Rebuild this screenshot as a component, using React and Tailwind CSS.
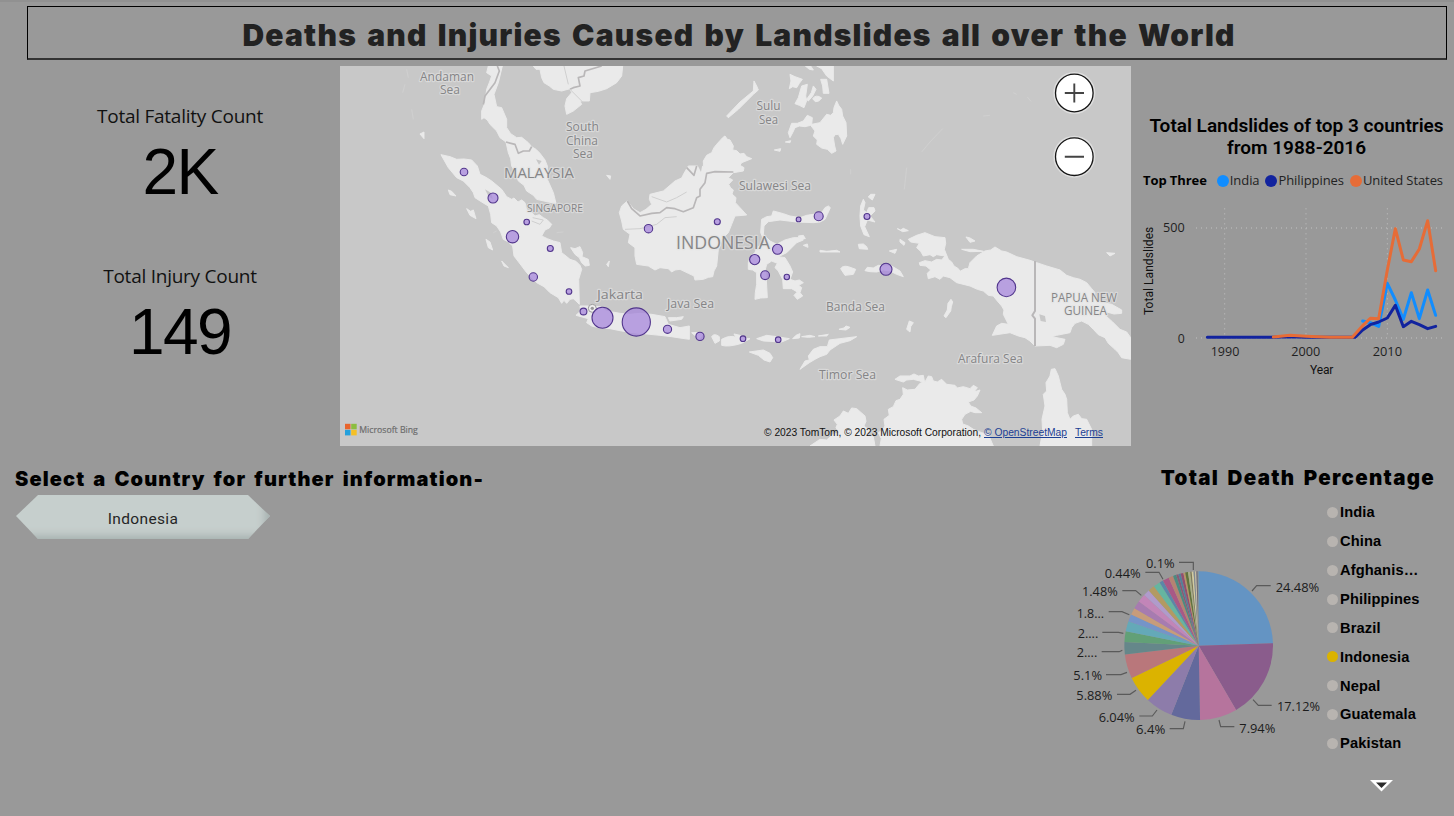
import React from "react";

const LAND = [
  "M303 266L330 272 350 280 372 279 395 282 412 300 420 325 438 334 455 345 485 370 500 392 515 400 522 396 534 408 545 402 555 410 560 432 572 436 585 450 598 446 610 455 622 462 635 475 628 486 615 492 605 510 622 518 640 525 660 530 665 560 678 570 690 580 708 586 720 598 725 610 716 640 718 715 708 705 700 698 690 700 680 712 672 703 665 712 655 695 630 680 612 662 590 650 560 620 545 600 522 570 518 540 505 528 490 520 482 498 470 480 455 470 452 445 445 420 425 408 405 395 400 380 390 365 370 345 350 335 325 305Z",
  "M692 545L705 548 720 542 728 560 726 572 745 580 748 598 736 600 725 590 718 575 705 565Z",
  "M445 0L487 0 475 50 462 85 470 122 485 125 500 160 500 185 512 203 530 215 545 214 565 230 575 242 588 250 600 262 615 282 622 300 622 340 640 380 648 412 625 408 590 400 580 388 560 375 552 358 535 345 528 322 515 300 512 278 505 260 498 228 480 215 470 195 450 175 442 162 432 155 425 160 425 135 435 110 440 70 448 50 455 30 440 20Z",
  "M580 0L588 10 600 10 605 35 612 50 628 60 640 70 665 75 690 68 695 80 680 98 675 120 680 145 700 135 725 115 720 105 732 105 748 105 750 80 775 76 800 68 830 50 845 30 848 0Z",
  "M1155 210L1162 220 1170 222 1180 240 1178 252 1190 254 1200 264 1212 262 1220 272 1235 278 1205 290 1200 298 1212 305 1210 315 1180 320 1165 335 1178 342 1166 355 1172 366 1180 372 1176 384 1188 395 1186 410 1200 425 1220 447 1185 450 1175 475 1165 500 1145 520 1140 540 1135 550 1130 600 1122 615 1118 632 1105 634 1090 640 1065 642 1062 630 1045 622 1020 610 1005 612 995 618 985 608 960 605 945 612 925 600 890 595 885 570 885 545 865 530 870 505 850 490 845 465 838 440 845 420 862 405 880 428 900 440 918 430 935 415 928 400 930 385 970 375 990 358 1005 345 1025 336 1032 322 1045 300 1070 300 1090 302 1090 285 1100 268 1115 260 1122 245 1130 235 1148 215Z",
  "M1250 60L1255 72 1240 85 1220 105 1195 130 1165 155 1160 150 1200 108 1240 75 1242 45Z",
  "M1350 25L1365 32 1387 40 1378 52 1370 65 1358 62 1348 68 1353 45Z",
  "M1385 60L1402 55 1397 90 1400 104 1392 125 1378 118 1365 113 1375 95Z",
  "M1420 60L1428 70 1418 90 1405 105 1400 100 1414 80Z",
  "M1442 40L1460 40 1467 82 1450 82 1448 60Z",
  "M1430 0L1480 0 1480 45 1460 30 1445 8ZM1396 0L1412 0 1420 12 1408 10Z",
  "M1418 98Q1428 84 1445 96Q1438 108 1426 107Z",
  "M1490 105L1496 118 1505 130 1508 150 1518 170 1520 210 1508 235 1503 218 1495 205 1485 206 1480 215 1484 240 1488 255 1475 262 1462 250 1445 246 1430 235 1432 222 1420 210 1425 195 1412 178 1395 182 1378 180 1365 185 1358 200 1350 215 1345 200 1355 172 1372 172 1390 165 1402 148 1417 155 1415 175 1440 170 1460 145 1472 148 1480 140 1482 125Z",
  "M1303 252L1322 248 1320 256ZM1336 228L1352 224 1350 230Z",
  "M1265 460L1280 452 1295 450 1300 435 1330 443 1350 450 1380 455 1400 448 1420 445 1445 440 1455 425 1465 420 1471 425 1462 445 1455 460 1440 468 1420 470 1370 468 1320 462 1285 467 1272 480 1270 505 1290 525 1310 535 1335 522 1360 515 1385 515 1390 522 1370 530 1355 545 1340 560 1315 572 1335 575 1350 600 1358 618 1350 640 1365 645 1378 642 1390 650 1376 658 1385 665 1380 680 1388 690 1372 700 1362 688 1372 678 1355 668 1330 668 1328 640 1320 625 1315 615 1305 605 1312 592 1295 585 1280 595 1276 610 1278 625 1282 695 1262 696 1245 700 1246 680 1250 655 1250 620 1238 612 1225 610 1225 590 1232 570 1245 560 1250 545 1275 530 1262 500Z",
  "M1570 400L1575 410 1570 432 1580 440 1586 425 1602 425 1605 435 1590 450 1605 468 1582 462 1574 482 1588 512 1572 506 1562 480 1560 450 1562 420Z",
  "M1585 393L1592 385 1605 385 1597 402Z",
  "M1375 510L1390 508 1396 518 1380 518ZM1390 538L1402 534 1404 544ZM1440 553L1460 556 1490 553 1500 558 1470 558 1440 558ZM1555 535L1570 534 1580 542 1583 550 1558 548ZM1648 555L1670 550 1665 562ZM1680 520L1695 530 1692 538 1680 528ZM1672 488L1682 492 1690 487 1705 494 1688 497Z",
  "M1575 614L1582 604 1600 606 1615 598 1635 600 1655 600 1680 615 1690 632 1670 625 1650 615 1630 612 1610 618 1590 617ZM1502 608Q1508 598 1525 602L1547 610 1540 625 1515 628Z",
  "M1705 520L1730 508 1755 500 1785 512 1815 515 1817 532 1813 550 1825 580 1835 588 1842 600 1855 608 1860 616 1875 608 1885 608 1890 590 1910 570 1935 555 1952 552 1965 543 1985 555 2000 558 2030 572 2070 583 2090 590 2120 600 2160 612 2180 628 2200 635 2220 640 2240 650 2255 668 2265 680 2262 698 2280 708 2315 715 2345 732 2345 742 2322 744 2300 738 2300 752 2318 768 2340 790 2360 798 2372 815 2372 880 2345 875 2335 860 2325 850 2305 832 2295 815 2275 806 2260 790 2245 775 2225 765 2205 772 2195 785 2190 800 2150 808 2135 812 2175 820 2170 835 2150 845 2130 838 2085 840 2070 825 2055 815 2035 810 2010 800 1990 803 1957 808 1963 795 1970 780 1985 772 2005 775 1990 745 1992 732 1985 720 1972 705 1960 690 1945 688 1930 675 1912 670 1890 660 1850 650 1830 635 1810 630 1800 640 1785 632 1765 638 1762 622 1772 612 1758 600 1740 598 1738 590 1755 584 1775 588 1790 580 1805 582 1815 570 1790 566 1780 572 1770 566 1750 570 1742 556 1730 545 1738 532 1712 528Z",
  "M1865 550L1900 550 1930 556 1890 557ZM1878 513L1890 516 1905 525 1890 529Z",
  "M1833 700L1838 708 1834 722 1832 735 1818 755 1812 750 1822 732 1824 712ZM1708 765L1720 770 1712 782 1710 798 1700 790Z",
  "M1620 1140L1624 1118 1615 1100 1628 1092 1635 1080 1632 1060 1648 1048 1645 1030 1660 1022 1668 1004 1680 1000 1690 985 1688 965 1702 972 1725 970 1740 952 1755 948 1765 930 1775 932 1780 945 1792 948 1805 940 1820 955 1845 958 1852 966 1870 962 1890 968 1900 958 1912 965 1902 978 1920 972 1912 990 1902 1002 1885 1008 1892 1020 1908 1026 1925 1040 1905 1040 1892 1036 1875 1045 1865 1060 1868 1074 1885 1080 1900 1090 1925 1100 1945 1105 1960 1140Z",
  "M1410 1140L1425 1130 1440 1120 1460 1122 1480 1105 1498 1100 1488 1085 1492 1075 1482 1062 1500 1050 1510 1035 1525 1042 1535 1026 1550 1028 1575 1050 1578 1066 1572 1080 1590 1095 1582 1108 1600 1112 1605 1140Z",
  "M1665 940L1680 930 1710 930 1722 924 1735 930 1750 928 1755 955 1740 945 1720 940 1700 942 1690 948Z",
  "M2100 1140L2108 1095 2106 1060 2115 1020 2110 985 2120 975 2118 950 2130 930 2134 910 2145 908 2155 930 2160 950 2165 970 2175 985 2180 1000 2182 1040 2190 1060 2200 1050 2215 1045 2225 1058 2240 1060 2255 1090 2255 1140Z",
  "M708 748L722 735 720 720 745 720 780 722 800 735 840 742 870 745 900 742 935 745 975 752 985 775 1020 785 1048 780 1048 820 1020 816 995 812 960 808 930 805 880 800 845 795 810 788 780 786 755 780 740 770 745 758Z",
  "M985 755L1010 755 1030 752 1025 760 990 765ZM1055 800Q1065 798 1090 802L1078 820ZM1115 812Q1122 800 1138 812L1138 825 1125 832ZM1145 820Q1170 806 1188 814L1182 804 1200 808 1215 818 1230 818 1205 832Q1165 844 1145 838ZM1250 818L1280 808 1310 812 1348 818 1325 828 1270 825ZM1358 818L1368 808 1380 803 1378 816ZM1385 812L1410 808 1425 812 1405 814ZM1435 810L1465 805 1460 810ZM1497 790L1512 786 1518 780 1530 784 1518 792Z",
  "M1228 858L1270 852 1290 862 1298 875 1290 888 1272 882 1255 868ZM1380 910L1395 885 1408 882 1405 870 1420 850 1440 842 1462 842 1468 822 1500 818 1550 812 1530 824 1500 832 1470 852 1460 865 1440 872 1425 880 1408 890Z",
  "M325 372L335 376 348 390 330 386ZM380 428L392 436 400 432 408 458 390 448ZM438 520L450 528 458 552 445 545ZM485 585L505 605 492 600ZM800 595L808 585 805 602ZM240 204L252 198 252 218ZM2300 560L2325 562 2310 570ZM800 328L812 330 810 340ZM690 600L696 594 700 602Z",
];

const BUBBLES = [
  [464, 172, 3.8], [493, 198, 5], [526.7, 222, 2.8], [512.5, 236.7, 6.2], [550.3, 248.5, 3],
  [533.3, 277, 4.2], [569, 291.5, 2.8], [583.5, 311.5, 3.4], [602.5, 317.7, 10.5], [636.3, 322, 14.1],
  [667.5, 329.3, 4.1], [700, 336.4, 4.1], [743, 338.7, 2.8], [778.2, 339.7, 2.8], [648.5, 228.7, 4.2],
  [717.3, 221.8, 3], [798.6, 219.4, 2.4], [818.7, 216.3, 4.5], [867, 216.5, 3], [777.5, 249.3, 5],
  [754.7, 259.6, 5.1], [765.1, 275.2, 4.4], [786.8, 277, 2.7], [886, 269.3, 6], [1006.4, 287.4, 9.3],
];

const LABELS = [
  [12, ["Andaman", 80, 14.5, 54], ["Sea", 100, 28, 20]],
  [12, ["South", 226, 64.5, 33], ["China", 226, 78.5, 32], ["Sea", 233, 92, 20]],
  [14.5, ["MALAYSIA", 164, 111.5, 70]],
  [10.5, ["SINGAPORE", 187, 145.5, 56]],
  [12, ["Sulu", 416.5, 44, 24], ["Sea", 419, 58, 19]],
  [12, ["Sulawesi Sea", 399, 124, 72]],
  [18, ["INDONESIA", 336, 183, 94]],
  [13.5, ["Jakarta", 257, 233, 46]],
  [12, ["Java Sea", 327, 242, 47]],
  [12, ["Banda Sea", 486, 245, 59]],
  [12, ["Timor Sea", 479, 313, 57]],
  [12, ["Arafura Sea", 618, 297, 65]],
  [12, ["PAPUA NEW", 711, 236, 66], ["GUINEA", 724, 249, 43]],
];

function MapView() {
  return (
    <div className="relative h-[380px] w-[791px] shrink-0 overflow-hidden bg-[#c8c8c8]">
      <svg className="block" width="791" height="380" viewBox="0 0 791 380">
        <g transform="scale(.33333)">
          <g fill="#eaeaea" stroke="#eaeaea" strokeWidth="3" strokeLinejoin="round">
            {LAND.map((d) => <path key={d} d={d} />)}
          </g>
          <g fill="none" stroke="#b9b7b8" strokeWidth="5" strokeLinejoin="round">
            <path d="M472 0L478 15 465 50 435 90 430 115M498 228L525 235 535 262 550 255 568 255 575 242M785 0L735 15 732 30 715 35 720 60 700 65 690 70" />
            <path d="M862 405L875 428 900 450 935 442 960 440 980 425 1005 428 1030 437 1060 425 1070 395 1080 390 1080 370 1095 350 1100 322 1125 317 1180 318M1040 305L1062 328 1070 300" />
            <path d="M2085 585L2085 735 2077 748 2085 758 2085 840" strokeWidth="6" />
          </g>
          <g fill="none" stroke="#cfcfcf" strokeWidth="3">
            <path d="M690 70L730 110M672 0L685 55M855 490L900 488 950 475 975 455 1010 452M935 392L980 408 1010 395 1040 378M578 455L610 462 600 475 575 465" />
          </g>
          <g fill="#c8c8c8">
            <path d="M435 370L455 382 458 400 445 390ZM588 280L605 285 597 296ZM2098 745L2115 750 2118 768 2102 765ZM1070 292L1088 290 1083 318Z" />
          </g>
          <g fill="none" stroke="#d0d0d0" strokeWidth="3">
            <path d="M1745 258L1770 228 1808 188M1700 305L1693 370M2020 80L2030 85M2062 93L2073 106M1930 150L1950 148M200 10L205 35M195 55L188 80M215 130L220 160M1532 310L1532 325M460 500L470 495M650 500L670 498" />
          </g>
          <circle cx="757" cy="727" r="12" fill="#eee" stroke="#9b9b9b" strokeWidth="3" />
          <circle cx="757" cy="727" r="5" fill="#999" />
        </g>
        <g fill="#858587" fontFamily="'Open Sans','Noto Sans',sans-serif" stroke="#e2e2e2" strokeWidth="2.4" strokeOpacity=".65" paintOrder="stroke" strokeLinejoin="round">
          {LABELS.map(([size, ...lines]) => (
            <text key={lines[0][0]} fontSize={size}>
              {lines.map(([t, x, y, w]) => (
                <tspan key={t} x={x} y={y} textLength={w} lengthAdjust="spacingAndGlyphs">{t}</tspan>
              ))}
            </text>
          ))}
        </g>
        <g transform="translate(-340 -66)" fill="#a584dc" fillOpacity=".72" stroke="#51358c" strokeWidth="1.1">
          {BUBBLES.map(([x, y, r]) => <circle key={x} cx={x} cy={y} r={r} />)}
        </g>
        <g>
          <circle cx="734.3" cy="27" r="21" fill="#dedede" />
          <circle cx="734.3" cy="27" r="18.8" fill="#fff" stroke="#151515" strokeWidth="1.3" />
          <circle cx="734.3" cy="90.7" r="21" fill="#dedede" />
          <circle cx="734.3" cy="90.7" r="18.8" fill="#fff" stroke="#151515" strokeWidth="1.3" />
          <path d="M724.8 27H744M734.3 17.4V36.6M724.8 90.7H744" stroke="#444" strokeWidth="1.9" />
        </g>
        <path d="M5 357.8h5.5v5.5H5z" fill="#e8642c" />
        <path d="M11.2 357.8h5.5v5.5h-5.5z" fill="#8cbd3f" />
        <path d="M5 363.9h5.5v5.5H5z" fill="#24a0dc" />
        <path d="M11.2 363.9h5.5v5.5h-5.5z" fill="#f5c026" />
        <text x="19.3" y="367" fontSize="9.5" textLength="58.5" lengthAdjust="spacingAndGlyphs" fill="#6c6c6c" stroke="#6c6c6c" strokeWidth=".2" fontFamily="'Open Sans',sans-serif">Microsoft Bing</text>
        <g fontFamily="'Liberation Sans',sans-serif" fontSize="10">
          <text x="424" y="370" textLength="217" lengthAdjust="spacingAndGlyphs" fill="#111">© 2023 TomTom, © 2023 Microsoft Corporation,</text>
          <text x="644" y="370" textLength="83" lengthAdjust="spacingAndGlyphs" fill="#1c3f94" textDecoration="underline">© OpenStreetMap</text>
          <text x="735" y="370" textLength="28" lengthAdjust="spacingAndGlyphs" fill="#1c3f94" textDecoration="underline">Terms</text>
        </g>
      </svg>
    </div>
  );
}

function LineChart() {
  return (
    <svg className="block" width="319" height="180" viewBox="0 300 957 540" fontFamily="'Open Sans','Noto Sans',sans-serif">
      <g stroke="#c2c2c2" strokeWidth="3" strokeDasharray="3 12" fill="none">
        <path d="M183 384H930M183 714H930M269 325V705M513 325V705M757 325V705" />
      </g>
      <g fill="none" strokeWidth="9" strokeLinejoin="round" strokeLinecap="round">
        <path d="M683 663L706 668 731 679 757 550 781 600 805 658 829 578 853 656 878 570 902 646" stroke="#118dff" />
        <path d="M217 712H415L460 710 513 712H660L683 690 706 674 731 666 757 654 781 616 805 680 829 664 853 674 878 686 902 679" stroke="#12239e" />
        <path d="M415 711L465 706 513 709 585 712H652L683 677 706 655 731 656 757 510 781 386 805 480 829 485 853 447 878 362 902 512" stroke="#e66c37" />
      </g>
      <g fill="#1f1f1f" fontSize="40">
        <text x="84" y="395" textLength="65" lengthAdjust="spacingAndGlyphs">500</text>
        <text x="128" y="728" textLength="21" lengthAdjust="spacingAndGlyphs">0</text>
        <text x="227" y="767" textLength="86" lengthAdjust="spacingAndGlyphs">1990</text>
        <text x="469" y="767" textLength="87" lengthAdjust="spacingAndGlyphs">2000</text>
        <text x="713" y="767" textLength="88" lengthAdjust="spacingAndGlyphs">2010</text>
      </g>
      <g fill="#111" fontSize="36" fontFamily="Roboto,sans-serif">
        <text x="525" y="821" textLength="70">Year</text>
        <text transform="translate(54 645) rotate(-90)" textLength="265">Total Landslides</text>
      </g>
    </svg>
  );
}

const SLICES = [
  [24.48, "#6494c3"], [41.6, "#8a5c8c"], [49.7, "#b6749d"], [56, "#63699c"], [61.98, "#8d7caa"],
  [67.86, "#dbb300"], [73.1, "#b9777b"], [75.8, "#65878a"], [78.1, "#62a077"], [80.3, "#64a9b8"],
  [81.9, "#7594c8"], [83.4, "#c79c7b"], [85.1, "#a77bb0"], [86.9, "#c285b8"], [88.3, "#b09bcb"],
  [89.7, "#b29a63"], [91.2, "#66b5a0"], [92, "#5b87a8"], [93.4, "#a85986"], [94.4, "#b58372"],
  [95.1, "#4d8a80"], [95.6, "#8a5975"], [96.1, "#547f99"], [96.7, "#934f70"], [97.1, "#b89465"],
  [97.7, "#62733c"], [98.2, "#a9ae87"], [98.5, "#7f7b58"], [98.9, "#d2cba0"], [99.2, "#818a91"],
  [99.5, "#c9c1a5"], [99.8, "#716b78"], [100, "#7897a3"],
];

function at(p) {
  const a = (p / 100) * Math.PI * 2;
  return `${416 + 223 * Math.sin(a)} ${317 - 223 * Math.cos(a)}`;
}

const PIE_LABELS = [
  ["24.48%", 647, 156, 131], ["17.12%", 651, 514, 129], ["7.94%", 538, 579, 108], ["6.4%", 228, 583, 88],
  ["6.04%", 116, 545, 108], ["5.88%", 49, 480, 108], ["5.1%", 40, 420, 86], ["2....", 50, 352, 62],
  ["2....", 53, 294, 62], ["1.8...", 50, 235, 82], ["1.48%", 66, 169, 107], ["0.44%", 134, 114, 108],
  ["0.1%", 258, 85, 86],
];

function PieChart() {
  return (
    <svg className="block shrink-0" width="270" height="210" viewBox="0 0 810 630">
      {SLICES.map(([end, fill], i) => (
        <path key={end} fill={fill} d={`M416 317L${at(i ? SLICES[i - 1][0] : 0)}A223 223 0 0 1 ${at(end)}Z`} />
      ))}
      <path fill="none" stroke="#5a5a5a" strokeWidth="3.5" d="M576 153L590 137H632M579 479L595 496H635M477 540L482 560H523M375 544L370 566H329M291 510L277 528H238M228 451L210 463H171M201 397L183 404H138M187 331L178 335H125M190 280L176 277H127M208 224L186 215H146M244 166L227 152H187M309 118L297 97H256M400 90V67H357" />
      <g fill="#1c1c1c" fontSize="40" fontFamily="'Open Sans','Noto Sans',sans-serif">
        {PIE_LABELS.map(([t, x, y, w]) => (
          <text key={y} x={x} y={y} textLength={w} lengthAdjust="spacingAndGlyphs">{t}</text>
        ))}
      </g>
    </svg>
  );
}

const COUNTRIES = ["India", "China", "Afghanis…", "Philippines", "Brazil", "Indonesia", "Nepal", "Guatemala", "Pakistan"];

function Card({ label, value }) {
  return (
    <div className="flex h-[160px] w-[360px] flex-col items-center">
      <div className="font-['Open_Sans'] text-[19px] leading-[26px] tracking-[-0.25px] text-[#111]">{label}</div>
      <div className="mt-[9px] font-['Liberation_Sans'] text-[64px] leading-[68px] tracking-[-1.6px] text-black">{value}</div>
    </div>
  );
}

export default function App() {
  return (
    <div className="flex h-[816px] w-[1454px] flex-col overflow-hidden border-t-2 border-[#919191] bg-[#999999]">
      <header className="mt-[4px] ml-[27px] flex h-[54px] w-[1420px] shrink-0 items-center justify-center border border-b-2 border-black border-b-[#333] pt-[5px] pl-[4px]">
        <h1 className="font-['Inter'] text-[30px] font-black tracking-[1.22px] [word-spacing:3px] whitespace-nowrap text-[#222]">
          Deaths and Injuries Caused by Landslides all over the World
        </h1>
      </header>

      <main className="mt-[6px] flex h-[380px] shrink-0">
        <section className="w-[340px] shrink-0 pt-[37px]">
          <Card label="Total Fatality Count" value="2K" />
          <Card label="Total Injury Count" value="149" />
        </section>
        <MapView />
        <section className="ml-[4px] flex w-[319px] flex-col pt-[49px]">
          <h2 className="pl-[4px] text-center font-['Roboto'] text-[19px] leading-[22px] font-semibold text-black">
            Total Landslides of top 3 countries<br />from 1988-2016
          </h2>
          <div className="mt-[12px] flex h-[20px] items-center pl-[8px] font-['Open_Sans'] text-[13px] tracking-[-0.08px] whitespace-nowrap text-[#222]">
            <b className="mr-[10px] text-black">Top Three</b>
            <i className="mr-px size-[12px] rounded-full bg-[#118dff]" /><span className="mr-[6px]">India</span>
            <i className="mr-px size-[12px] rounded-full bg-[#12239e]" /><span className="mr-[6px]">Philippines</span>
            <i className="mr-px size-[12px] rounded-full bg-[#e66c37]" /><span>United States</span>
          </div>
          <div className="mt-[9px]"><LineChart /></div>
        </section>
      </main>

      <div className="flex">
        <section className="w-[1060px] shrink-0 pt-[19px] pl-[15px]">
          <h2 className="font-['Inter'] text-[20px] leading-[28px] font-black tracking-[1.12px] [word-spacing:3px] whitespace-nowrap text-black">
            Select a Country for further information-
          </h2>
          <button className="mt-[2px] ml-px flex h-[44px] w-[254px] items-center justify-center bg-[#c6cfcd] pt-[6px] font-['Roboto'] text-[15.5px] tracking-[0.35px] text-[#252525] shadow-[inset_-8px_-6px_8px_-3px_#a4afad] [clip-path:polygon(0_48%,22px_0,232px_0,100%_48%,232px_100%,22px_100%)]">
            Indonesia
          </button>
        </section>
        <section className="w-[394px]">
          <h2 className="mt-[18px] pr-[19px] text-right font-['Inter'] text-[20.5px] leading-[28px] font-black tracking-[1.3px] [word-spacing:3px] whitespace-nowrap text-black">
            Total Death Percentage
          </h2>
          <div className="flex">
            <div className="w-[267px] shrink-0 pt-[48px]"><PieChart /></div>
            <div className="pt-[6px]">
              <ul className="font-['Liberation_Sans'] text-[14.67px] font-bold tracking-[0.12px] text-black">
                {COUNTRIES.map((c) => (
                  <li key={c} className="flex h-[28.87px] items-center">
                    <i className={c === "Indonesia" ? "mr-[2px] size-[11px] rounded-full bg-[#dbb300]" : "mr-[2px] size-[11px] rounded-full bg-[#b8b4b0]"} />
                    <span>{c}</span>
                  </li>
                ))}
              </ul>
              <svg className="mt-[21px] ml-[43px] block" width="23" height="13" viewBox="0 0 23 13">
                <path d="M0 1H23L11.5 12.5Z" fill="#fff" />
                <path d="M6 3.5H17L11.5 9Z" fill="#2b2b2b" />
              </svg>
            </div>
          </div>
        </section>
      </div>
    </div>
  );
}
